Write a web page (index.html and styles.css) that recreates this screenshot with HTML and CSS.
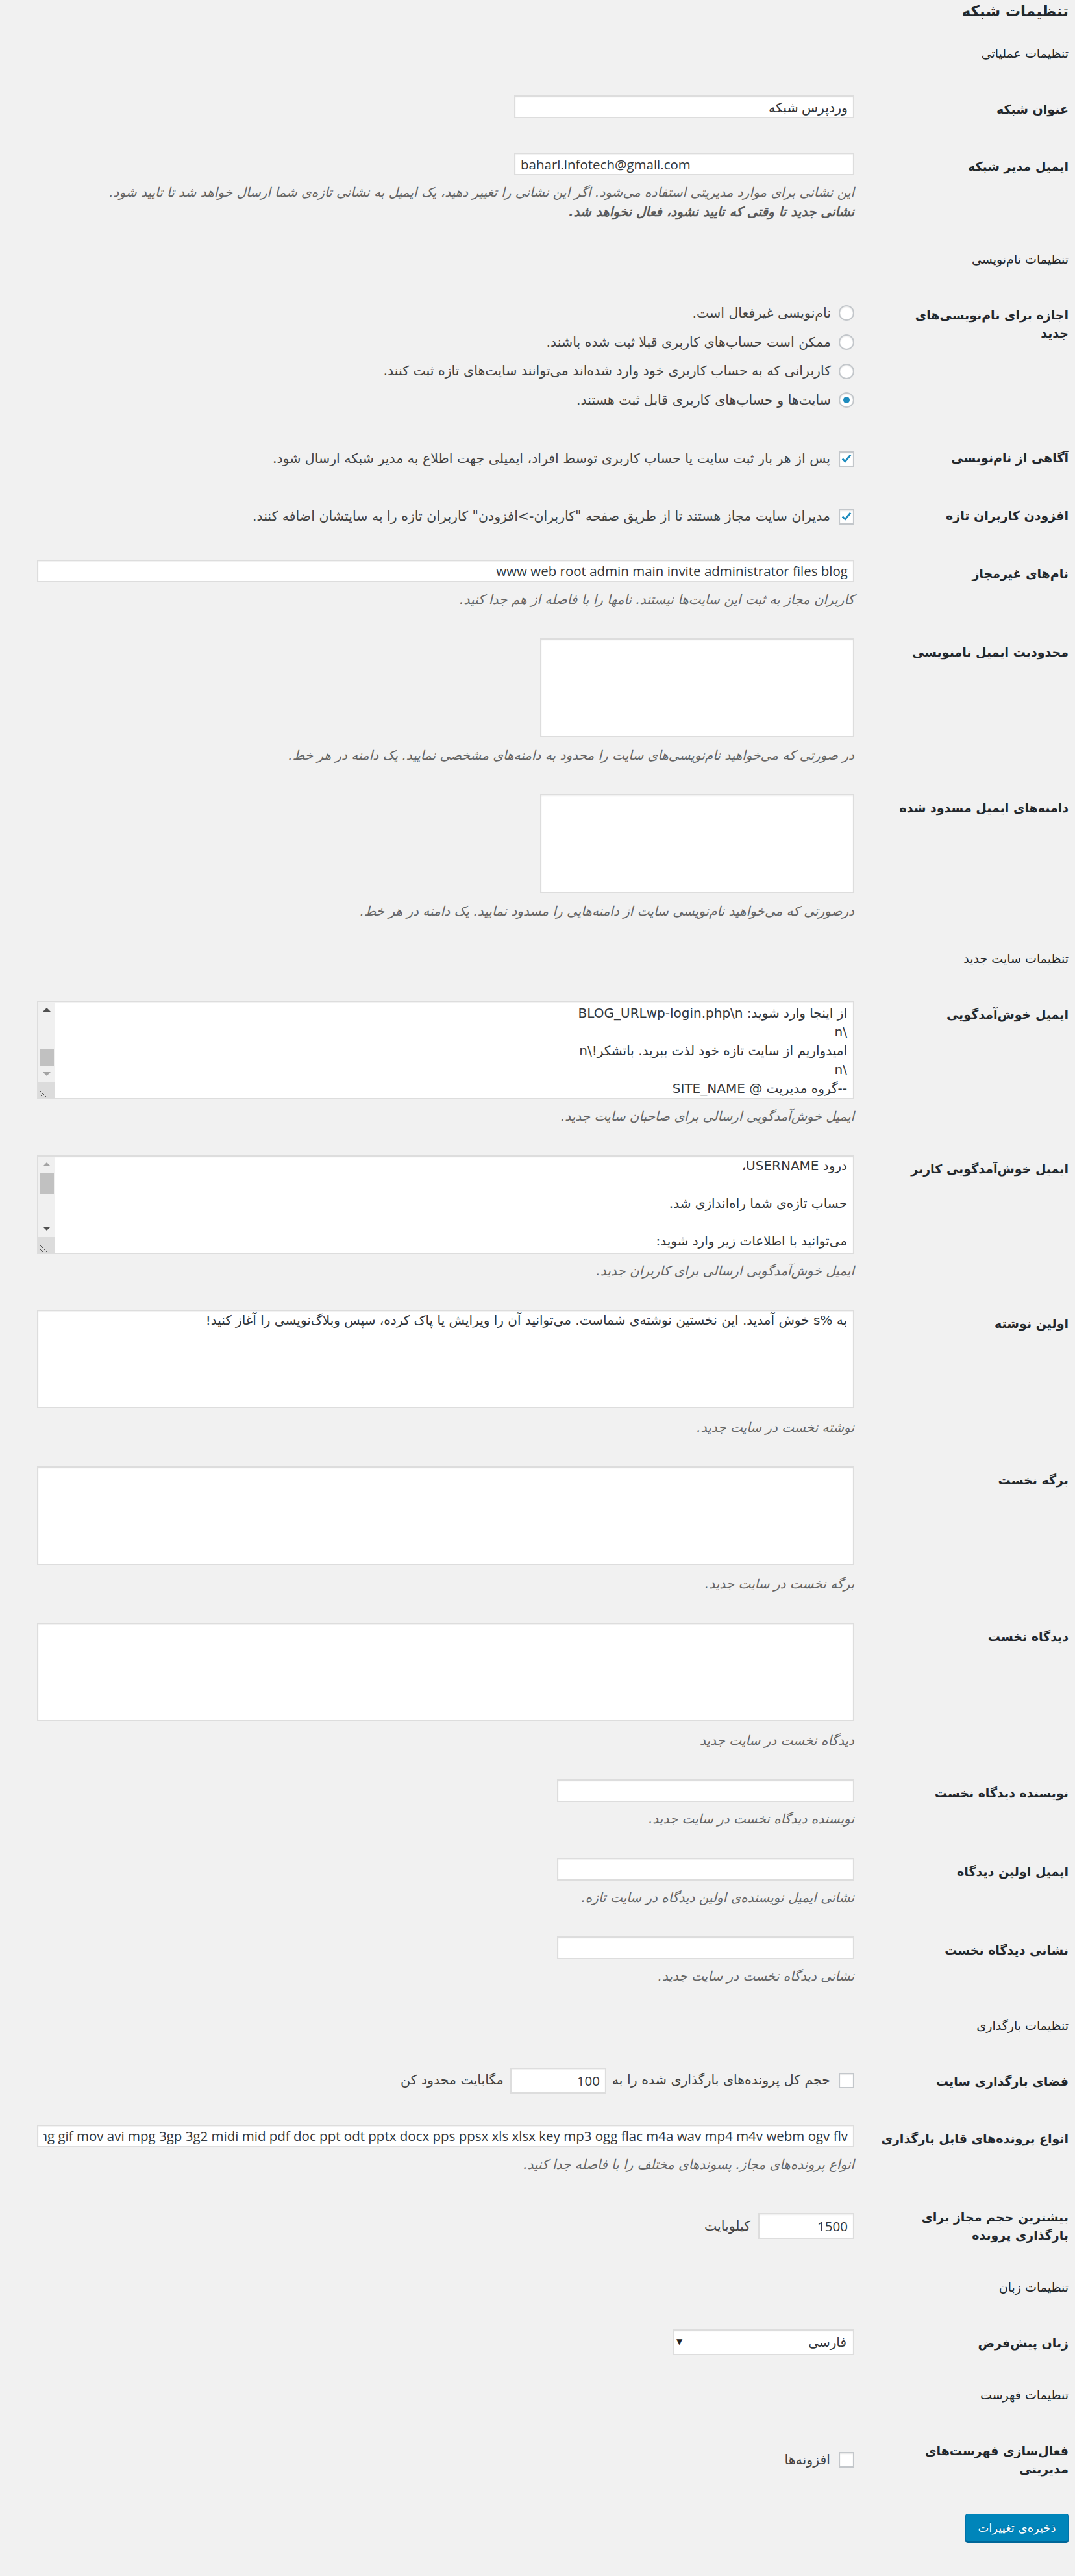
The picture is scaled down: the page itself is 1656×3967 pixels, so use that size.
FILE: index.html
```html
<!DOCTYPE html>
<html lang="fa" dir="rtl">
<head>
<meta charset="utf-8">
<title>تنظیمات شبکه</title>
<link rel="stylesheet" href="styles.css">
</head>
<body>
<div class="wrap">
  <h2 class="page-title">تنظیمات شبکه</h2>

  <h3 class="sec">تنظیمات عملیاتی</h3>
  <div class="form">
    <div class="row">
      <div class="th">عنوان شبکه</div>
      <div class="td"><input class="inp regular" type="text" value="وردپرس شبکه"></div>
    </div>
    <div class="row">
      <div class="th">ایمیل مدیر شبکه</div>
      <div class="td">
        <input class="inp regular ltr" type="text" value="bahari.infotech@gmail.com">
        <p class="desc">این نشانی برای موارد مدیریتی استفاده می‌شود. اگر این نشانی را تغییر دهید، یک ایمیل به نشانی تازه‌ی شما ارسال خواهد شد تا تایید شود. <strong>نشانی جدید تا وقتی که تایید نشود، فعال نخواهد شد.</strong></p>
      </div>
    </div>
  </div>

  <h3 class="sec">تنظیمات نام‌نویسی</h3>
  <div class="form">
    <div class="row">
      <div class="th">اجازه برای نام‌نویسی‌های<br>جدید</div>
      <div class="td td-radios">
        <div class="choice"><span class="radio"></span><span>نام‌نویسی غیرفعال است.</span></div>
        <div class="choice"><span class="radio"></span><span>ممکن است حساب‌های کاربری قبلا ثبت شده باشند.</span></div>
        <div class="choice"><span class="radio"></span><span>کاربرانی که به حساب کاربری خود وارد شده‌اند می‌توانند سایت‌های تازه ثبت کنند.</span></div>
        <div class="choice"><span class="radio on"></span><span>سایت‌ها و حساب‌های کاربری قابل ثبت هستند.</span></div>
      </div>
    </div>
    <div class="row row-check">
      <div class="th">آگاهی از نام‌نویسی</div>
      <div class="td td-check">
        <div class="check-line"><span class="cbox"><svg viewBox="0 0 24 24" width="22" height="22"><path d="M4.5 11.5 L9.5 16.5 L19.5 4.5" fill="none" stroke="#1e8cbe" stroke-width="3.4"/></svg></span><span>پس از هر بار ثبت سایت یا حساب کاربری توسط افراد، ایمیلی جهت اطلاع به مدیر شبکه ارسال شود.</span></div>
      </div>
    </div>
    <div class="row row-check">
      <div class="th">افزودن کاربران تازه</div>
      <div class="td td-check">
        <div class="check-line"><span class="cbox"><svg viewBox="0 0 24 24" width="22" height="22"><path d="M4.5 11.5 L9.5 16.5 L19.5 4.5" fill="none" stroke="#1e8cbe" stroke-width="3.4"/></svg></span><span>مدیران سایت مجاز هستند تا از طریق صفحه "کاربران-&gt;افزودن" کاربران تازه را به سایتشان اضافه کنند.</span></div>
      </div>
    </div>
    <div class="row">
      <div class="th">نام‌های غیرمجاز</div>
      <div class="td">
        <input class="inp large" type="text" value="www web root admin main invite administrator files blog">
        <p class="desc">کاربران مجاز به ثبت این سایت‌ها نیستند. نامها را با فاصله از هم جدا کنید.</p>
      </div>
    </div>
    <div class="row">
      <div class="th">محدودیت ایمیل نامنویسی</div>
      <div class="td">
        <textarea class="ta ta-mid"></textarea>
        <p class="desc desc-ta">در صورتی که می‌خواهید نام‌نویسی‌های سایت را محدود به دامنه‌های مشخصی نمایید. یک دامنه در هر خط.</p>
      </div>
    </div>
    <div class="row">
      <div class="th">دامنه‌های ایمیل مسدود شده</div>
      <div class="td">
        <textarea class="ta ta-mid"></textarea>
        <p class="desc desc-ta">درصورتی که می‌خواهید نام‌نویسی سایت از دامنه‌هایی را مسدود نمایید. یک دامنه در هر خط.</p>
      </div>
    </div>
  </div>

  <h3 class="sec">تنظیمات سایت جدید</h3>
  <div class="form">
    <div class="row">
      <div class="th">ایمیل خوش‌آمدگویی</div>
      <div class="td">
        <div class="ta-box">
          <div class="ta-text ta-bottom">
            <div class="ln">از اینجا وارد شوید: BLOG_URLwp-login.php\n</div>
            <div class="ln">\n</div>
            <div class="ln">امیدواریم از سایت تازه خود لذت ببرید. باتشکر!\n</div>
            <div class="ln">\n</div>
            <div class="ln">--گروه مدیریت @ SITE_NAME</div>
          </div>
          <div class="sb sb-end">
            <div class="sb-btn"><span class="tri-up"></span></div>
            <div class="sb-track"><div class="sb-thumb"></div></div>
            <div class="sb-btn"><span class="tri-down off"></span></div>
            <div class="sb-corner"><svg viewBox="0 0 26 26" width="26" height="26"><path d="M3 13 L15 25 M3 19 L9 25" stroke="#555" stroke-width="1" fill="none"/></svg></div>
          </div>
        </div>
        <p class="desc desc-ta2">ایمیل خوش‌آمدگویی ارسالی برای صاحبان سایت جدید.</p>
      </div>
    </div>
    <div class="row">
      <div class="th">ایمیل خوش‌آمدگویی کاربر</div>
      <div class="td">
        <div class="ta-box">
          <div class="ta-text ta-top">
            <div class="ln">درود USERNAME،</div>
            <div class="ln">&nbsp;</div>
            <div class="ln">حساب تازه‌ی شما راه‌اندازی شد.</div>
            <div class="ln">&nbsp;</div>
            <div class="ln">می‌توانید با اطلاعات زیر وارد شوید:</div>
          </div>
          <div class="sb">
            <div class="sb-btn"><span class="tri-up off"></span></div>
            <div class="sb-track"><div class="sb-thumb tall"></div></div>
            <div class="sb-btn"><span class="tri-down"></span></div>
            <div class="sb-corner"><svg viewBox="0 0 26 26" width="26" height="26"><path d="M3 13 L15 25 M3 19 L9 25" stroke="#555" stroke-width="1" fill="none"/></svg></div>
          </div>
        </div>
        <p class="desc desc-ta2">ایمیل خوش‌آمدگویی ارسالی برای کاربران جدید.</p>
      </div>
    </div>
    <div class="row">
      <div class="th">اولین نوشته</div>
      <div class="td">
        <textarea class="ta ta-wide">به %s خوش آمدید. این نخستین نوشته‌ی شماست. می‌توانید آن را ویرایش یا پاک کرده، سپس وبلاگ‌نویسی را آغاز کنید!</textarea>
        <p class="desc desc-ta desc-ta3">نوشته نخست در سایت جدید.</p>
      </div>
    </div>
    <div class="row">
      <div class="th">برگه نخست</div>
      <div class="td">
        <textarea class="ta ta-wide"></textarea>
        <p class="desc desc-ta desc-ta3">برگه نخست در سایت جدید.</p>
      </div>
    </div>
    <div class="row">
      <div class="th">دیدگاه نخست</div>
      <div class="td">
        <textarea class="ta ta-wide"></textarea>
        <p class="desc desc-ta desc-ta3">دیدگاه نخست در سایت جدید</p>
      </div>
    </div>
    <div class="row">
      <div class="th">نویسنده دیدگاه نخست</div>
      <div class="td">
        <input class="inp medium" type="text" value="">
        <p class="desc">نویسنده دیدگاه نخست در سایت جدید.</p>
      </div>
    </div>
    <div class="row">
      <div class="th">ایمیل اولین دیدگاه</div>
      <div class="td">
        <input class="inp medium" type="text" value="">
        <p class="desc">نشانی ایمیل نویسنده‌ی اولین دیدگاه در سایت تازه.</p>
      </div>
    </div>
    <div class="row">
      <div class="th">نشانی دیدگاه نخست</div>
      <div class="td">
        <input class="inp medium" type="text" value="">
        <p class="desc">نشانی دیدگاه نخست در سایت جدید.</p>
      </div>
    </div>
  </div>

  <h3 class="sec sec-upload">تنظیمات بارگذاری</h3>
  <div class="form">
    <div class="row">
      <div class="th">فضای بارگذاری سایت</div>
      <div class="td">
        <div class="inline-line">
          <span class="cbox"></span>
          <span class="t-after-box">حجم کل پرونده‌های بارگذاری شده را به</span>
          <input class="inp small num" type="text" value="100">
          <span class="t-after-inp">مگابایت محدود کن</span>
        </div>
      </div>
    </div>
    <div class="row">
      <div class="th">انواع پرونده‌های قابل بارگذاری</div>
      <div class="td">
        <input class="inp large" type="text" value="jpg jpeg png gif mov avi mpg 3gp 3g2 midi mid pdf doc ppt odt pptx docx pps ppsx xls xlsx key mp3 ogg flac m4a wav mp4 m4v webm ogv flv">
        <p class="desc">انواع پرونده‌های مجاز. پسوندهای مختلف را با فاصله جدا کنید.</p>
      </div>
    </div>
    <div class="row row-mid">
      <div class="th">بیشترین حجم مجاز برای<br>بارگذاری پرونده</div>
      <div class="td">
        <div class="inline-line">
          <input class="inp small num" type="text" value="1500">
          <span class="t-after-inp2">کیلوبایت</span>
        </div>
      </div>
    </div>
  </div>

  <h3 class="sec">تنظیمات زبان</h3>
  <div class="form">
    <div class="row">
      <div class="th">زبان پیش‌فرض</div>
      <div class="td">
        <div class="select-wrap">
          <select class="select"><option>فارسی</option></select>
          <span class="sel-arrow">▼</span>
        </div>
      </div>
    </div>
  </div>

  <h3 class="sec">تنظیمات فهرست</h3>
  <div class="form">
    <div class="row row-mid">
      <div class="th">فعال‌سازی فهرست‌های<br>مدیریتی</div>
      <div class="td">
        <div class="check-line"><span class="cbox"></span><span>افزونه‌ها</span></div>
      </div>
    </div>
  </div>

  <p class="submit"><button class="button-primary" type="button">ذخیره‌ی تغییرات</button></p>
</div>
</body>
</html>
```

FILE: styles.css
```css
* { box-sizing: border-box; }
html { background: #f1f1f1; }
body {
  margin: 0;
  background: #f1f1f1;
  color: #444;
  font-family: "DejaVu Sans", "Noto Sans", sans-serif;
  font-size: 20.5px;
  line-height: 1.4;
}
.wrap { padding: 0 10px 0 42px; }

.page-title {
  margin: 0 0 33px;
  font-size: 23px;
  font-weight: bold;
  line-height: 34px;
  color: #23282d;
}
.sec {
  margin: 21px 0 27px;
  font-size: 19px;
  font-weight: normal;
  line-height: 30px;
  color: #23282d;
}
.sec-upload { margin-top: 24px; }

.row { display: flex; }
.th {
  flex: 0 0 315px;
  padding: 30px 0 30px 15px;
  font-weight: bold;
  font-size: 19px;
  line-height: 28px;
  color: #23282d;
}
.td {
  flex: 1 1 auto;
  min-width: 0;
  padding: 23px 15px 22px;
}
.row-check .th { padding-bottom: 31px; }
.td-check { padding-top: 31px; }
.td-radios { padding-top: 19px; }
.row-mid .td { display: flex; flex-direction: column; justify-content: center; }

.inp {
  display: block;
  height: 35px;
  margin: 0;
  border: 2px solid #dddddd;
  box-shadow: inset 0 1px 2px rgba(0,0,0,.07);
  background: #fff;
  color: #32373c;
  font-family: "Open Sans", "DejaVu Sans", sans-serif;
  font-size: 20.5px;
  padding: 0 8px;
  outline: none;
}
.ltr { direction: ltr; text-align: left; }
.regular { width: 524px; }
.medium { width: 458px; }
.large { width: 100%; }
.small { display: inline-block; flex: none; width: 148px; height: 40px; }
.num { text-align: right; }

.desc {
  margin: 11px 0 0;
  font-style: italic;
  color: #666;
  font-size: 20px;
  line-height: 30px;
}
.desc strong { display: block; font-weight: bold; color: #5a5a5a; }
.desc-ta { margin-top: 13px; }
.desc-ta2 { margin-top: 11px; }
.desc-ta.desc-ta3 { margin-top: 14px; }

.choice {
  display: flex;
  align-items: center;
  height: 44.67px;
  gap: 12px;
}
.radio {
  flex: none;
  width: 24px;
  height: 24px;
  border: 2px solid #c3c7cb;
  border-radius: 50%;
  background: #fff;
  box-shadow: inset 0 1px 2px rgba(0,0,0,.1);
  display: flex;
  align-items: center;
  justify-content: center;
}
.radio.on::before {
  content: "";
  width: 10px;
  height: 10px;
  border-radius: 50%;
  background: #1e8cbe;
}
.check-line {
  display: flex;
  align-items: center;
  min-height: 30px;
  gap: 13px;
}
.cbox {
  flex: none;
  width: 24px;
  height: 24px;
  border: 2px solid #c3c7cb;
  background: #fff;
  box-shadow: inset 0 1px 2px rgba(0,0,0,.1);
  display: flex;
  align-items: center;
  justify-content: center;
}
.cbox svg { display: block; }

.inline-line {
  display: flex;
  align-items: center;
  height: 40px;
}
.t-after-box { margin-right: 13px; margin-left: 9px; }
.t-after-inp { margin-right: 10px; }
.t-after-inp2 { margin-right: 12px; }

.ta {
  display: block;
  height: 152px;
  margin: 0;
  border: 2px solid #dddddd;
  box-shadow: inset 0 1px 2px rgba(0,0,0,.07);
  background: #fff;
  color: #32373c;
  font-family: "DejaVu Sans", sans-serif;
  font-size: 20px;
  line-height: 29px;
  padding: 0 9px;
  resize: none;
  outline: none;
  overflow: hidden;
}
.ta-mid { width: 484px; }
.ta-wide { width: 100%; }

.ta-box {
  display: flex;
  width: 100%;
  height: 152px;
  border: 2px solid #dddddd;
  box-shadow: inset 0 1px 2px rgba(0,0,0,.07);
  background: #fff;
}
.ta-text {
  flex: 1 1 auto;
  min-width: 0;
  display: flex;
  flex-direction: column;
  padding: 0 9px;
  color: #32373c;
  font-size: 20px;
  line-height: 29px;
}
.ta-bottom { justify-content: flex-end; }
.ta-top { justify-content: flex-start; }
.ln { flex: none; white-space: nowrap; }

.sb {
  flex: 0 0 25px;
  background: #f0f0f0;
  display: flex;
  flex-direction: column;
}
.sb-btn {
  flex: 0 0 25px;
  display: flex;
  align-items: center;
  justify-content: center;
}
.tri-up, .tri-down {
  width: 0;
  height: 0;
  border-left: 6px solid transparent;
  border-right: 6px solid transparent;
}
.tri-up { border-bottom: 6px solid #505050; }
.tri-down { border-top: 6px solid #505050; }
.tri-up.off { border-bottom-color: #a3a3a3; }
.tri-down.off { border-top-color: #a3a3a3; }
.sb-track {
  flex: 1 1 auto;
  display: flex;
  flex-direction: column;
  justify-content: flex-start;
  padding: 0 2px;
}
.sb-end .sb-track { justify-content: flex-end; }
.sb-thumb { height: 26px; background: #c1c1c1; }
.sb-thumb.tall { height: 32px; }
.sb-corner { flex: 0 0 24px; background: #dcdcdc; overflow: hidden; }
.sb-corner svg { display: block; }

.select-wrap { position: relative; width: 280px; height: 40px; }
.select {
  -webkit-appearance: none;
  appearance: none;
  width: 100%;
  height: 40px;
  margin: 0;
  border: 2px solid #dddddd;
  box-shadow: inset 0 1px 2px rgba(0,0,0,.07);
  background: #fff;
  color: #32373c;
  font-family: "DejaVu Sans", sans-serif;
  font-size: 20px;
  padding: 0 10px 0 30px;
  outline: none;
}
.sel-arrow {
  position: absolute;
  left: 6px;
  top: 12px;
  font-size: 12px;
  line-height: 14px;
  color: #222;
}

.submit { margin: 0; padding: 25px 0 40px; }
.button-primary {
  display: block;
  width: 159px;
  height: 43px;
  padding: 0 10px;
  background: #0085ba;
  border: 1px solid #0073aa;
  border-bottom-color: #006799;
  box-shadow: 0 2px 0 #006799;
  border-radius: 4px;
  color: #fff;
  font-family: "DejaVu Sans", sans-serif;
  font-size: 18px;
  text-shadow: 0 -1px 1px #006799;
}
```
